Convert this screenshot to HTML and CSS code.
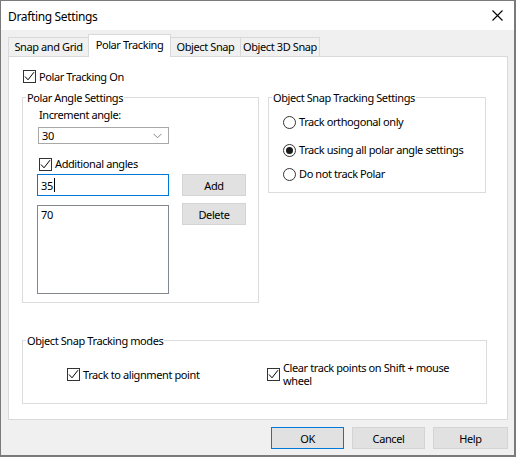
FILE: index.html
```html
<!DOCTYPE html>
<html lang="en">
<head>
    <meta charset="UTF-8">
    <title>Drafting Settings</title>
    <link rel="stylesheet" href="styles.css">
</head>
<body>
    <div class="window">
        <div class="titlebar">
            <span class="title">Drafting Settings</span>
            <svg class="close" width="11" height="11" viewBox="0 0 11 11">
                <path d="M0.5 0.5 L10.5 10.5 M10.5 0.5 L0.5 10.5" stroke="#000" stroke-width="1.1" fill="none"/>
            </svg>
        </div>

        <div class="client">
            <!-- tab strip -->
            <div class="tabs">
                <div class="tab tab-snap">Snap and Grid</div>
                <div class="tab tab-polar active">Polar Tracking</div>
                <div class="tab tab-osnap">Object Snap</div>
                <div class="tab tab-3d">Object 3D Snap</div>
            </div>

            <div class="panel">
                <div class="check top-check">
                    <span class="box"><svg width="11" height="11" viewBox="0 0 11 11"><path d="M1 5.5 L4 8.8 L10 1.2" stroke="#000" stroke-width="1" fill="none"/></svg></span>
                    Polar Tracking On
                </div>

                <div class="groups">
                    <fieldset class="group angles">
                        <legend>Polar Angle Settings</legend>
                        <div class="group-body">
                            <div class="field-label">Increment angle:</div>
                            <div class="select">
                                <span>30</span>
                                <svg width="9" height="6" viewBox="0 0 9 6"><path d="M0.5 0.8 L4.5 4.8 L8.5 0.8" stroke="#888" stroke-width="1" fill="none"/></svg>
                            </div>
                            <div class="check extra-check">
                                <span class="box"><svg width="11" height="11" viewBox="0 0 11 11"><path d="M1 5.5 L4 8.8 L10 1.2" stroke="#000" stroke-width="1" fill="none"/></svg></span>
                                Additional angles
                            </div>
                            <div class="angle-grid">
                                <div class="textbox focused">35<span class="caret"></span></div>
                                <button class="btn">Add</button>
                                <div class="listbox">70</div>
                                <button class="btn delete">Delete</button>
                            </div>
                        </div>
                    </fieldset>

                    <fieldset class="group tracking">
                        <legend>Object Snap Tracking Settings</legend>
                        <div class="group-body radios">
                            <div class="radio"><span class="dot"></span>Track orthogonal only</div>
                            <div class="radio on second"><span class="dot"></span>Track using all polar angle settings</div>
                            <div class="radio third"><span class="dot"></span>Do not track Polar</div>
                        </div>
                    </fieldset>
                </div>

                <fieldset class="group modes">
                    <legend>Object Snap Tracking modes</legend>
                    <div class="group-body modes-row">
                        <div class="check">
                            <span class="box"><svg width="11" height="11" viewBox="0 0 11 11"><path d="M1 5.5 L4 8.8 L10 1.2" stroke="#000" stroke-width="1" fill="none"/></svg></span>
                            Track to alignment point
                        </div>
                        <div class="check wrap">
                            <span class="box"><svg width="11" height="11" viewBox="0 0 11 11"><path d="M1 5.5 L4 8.8 L10 1.2" stroke="#000" stroke-width="1" fill="none"/></svg></span>
                            <span class="wrap-text">Clear track points on Shift + mouse wheel</span>
                        </div>
                    </div>
                </fieldset>
            </div>

            <div class="footer">
                <button class="btn default">OK</button>
                <button class="btn">Cancel</button>
                <button class="btn help">Help</button>
            </div>
        </div>
    </div>
</body>
</html>
```

FILE: styles.css
```css
* {
    box-sizing: border-box;
}
html, body {
    margin: 0;
    padding: 0;
}
body {
    font-family: "Noto Sans", "Open Sans", sans-serif;
    font-size: 11px;
    line-height: 15px;
    letter-spacing: -0.4px;
    color: #000;
    background: #fff;
}
.window {
    width: 516px;
    height: 457px;
    border: 1px solid #7a7a7a;
    border-right-width: 2px;
    border-bottom-width: 2px;
    background: #f0f0f0;
    display: flex;
    flex-direction: column;
}
.titlebar {
    height: 29px;
    background: #fff;
    display: flex;
    align-items: center;
    justify-content: space-between;
    padding: 0 11px 0 7px;
}
.title {
    font-size: 12px;
    letter-spacing: -0.35px;
    margin-top: 1px;
}
.client {
    flex: 1;
    padding: 0 6px 0 7px;
}

/* tabs */
.tabs {
    height: 26px;
    display: flex;
    align-items: flex-end;
}
.tab {
    height: 19px;
    border: 1px solid #d9d9d9;
    border-bottom: none;
    border-right: none;
    background: #f0f0f0;
    padding: 0;
    line-height: 18px;
    text-align: center;
    white-space: nowrap;
}
.tab-snap { width: 80px; }
.tab-osnap { width: 69px; }
.tab-3d { width: 80px; border-right: 1px solid #d9d9d9; }
.tab.active {
    width: 83px;
    height: 23px;
    background: #fff;
    border-right: 1px solid #d9d9d9;
    margin-bottom: -1px;
    position: relative;
    line-height: 19px;
}
.tab-polar + .tab {
    border-left: none;
}

/* page under the tabs */
.panel {
    height: 364px;
    background: #fff;
    border: 1px solid #d9d9d9;
    padding: 12px 0 0 13px;
}
.check {
    display: flex;
    align-items: center;
    gap: 3px;
}
.box {
    width: 13px;
    height: 13px;
    border: 1px solid #333;
    background: #fff;
    display: flex;
    align-items: center;
    justify-content: center;
    flex: none;
}
.top-check {
    margin-left: 1px;
}

.groups {
    display: flex;
    gap: 9px;
    margin-top: 6px;
    align-items: flex-start;
}
fieldset.group {
    margin: 0;
    padding: 0;
    border: 1px solid #dcdcdc;
    min-width: 0;
}
legend {
    padding: 0 1px;
    margin-left: 3px;
    line-height: 15px;
}
.angles {
    width: 237px;
    height: 213px;
}
.angles .group-body {
    padding: 2px 0 0 14px;
}
.field-label {
    line-height: 16px;
    margin-left: 2px;
}
.select {
    width: 131px;
    height: 17px;
    margin-top: 4px;
    margin-left: 1px;
    border: 1px solid #a8a8a8;
    display: flex;
    align-items: center;
    justify-content: space-between;
    padding: 0 6px 0 3px;
}
.extra-check {
    margin-top: 12px;
    margin-left: 2px;
    line-height: 16px;
}
.angle-grid {
    display: grid;
    grid-template-columns: 132px 64px;
    column-gap: 13px;
    row-gap: 9px;
    margin-top: 2px;
    align-items: start;
}
.textbox {
    height: 22px;
    border: 1px solid #0078d7;
    padding: 3px 0 0 3px;
    display: flex;
    align-items: flex-start;
}
.caret {
    width: 1px;
    height: 14px;
    background: #000;
    margin-left: 1px;
}
.listbox {
    height: 89px;
    border: 1px solid #828790;
    padding: 1px 0 0 3px;
}
.btn {
    font: inherit;
    letter-spacing: inherit;
    color: #000;
    height: 22px;
    background: #e1e1e1;
    border: 1px solid #d4d4d4;
    padding: 0;
}
.delete {
    margin-top: -2px;
}

.tracking {
    width: 218px;
    height: 103px;
}
.radios {
    padding: 9px 0 0 14px;
}
.radio {
    display: flex;
    align-items: center;
    gap: 3px;
    line-height: 16px;
}
.radio.second {
    margin-top: 12px;
}
.radio.third {
    margin-top: 8px;
}
.dot {
    width: 13px;
    height: 13px;
    border: 1px solid #333;
    border-radius: 50%;
    background: #fff;
    display: flex;
    align-items: center;
    justify-content: center;
}
.radio.on .dot::after {
    content: "";
    width: 7px;
    height: 7px;
    border-radius: 50%;
    background: #1a1a1a;
}

fieldset.modes {
    width: 465px;
    height: 71px;
    margin-top: 30px;
}
.modes-row {
    display: grid;
    grid-template-columns: 200px 1fr;
    padding: 13px 0 0 44px;
    align-items: center;
}
.wrap-text {
    width: 170px;
    line-height: 13px;
}

.footer {
    display: flex;
    justify-content: flex-end;
    gap: 8px;
    padding: 7px 0 0 0;
}
.footer .btn {
    width: 73px;
}
.footer .help {
    width: 75px;
}
.btn.default {
    border-color: #0078d7;
}
```
